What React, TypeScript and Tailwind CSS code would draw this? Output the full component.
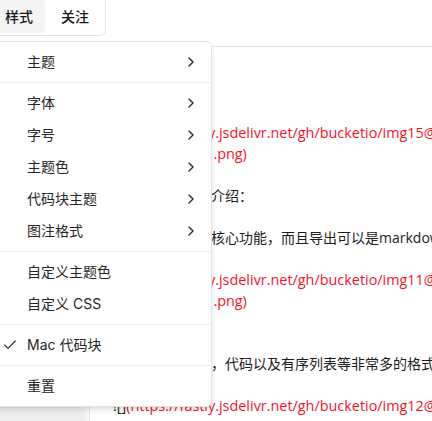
import React from 'react';
import { Check, ChevronRight } from 'lucide-react';

type MenuEntry = { label: string; sub?: boolean; checked?: boolean } | 'sep';

const menuEntries: MenuEntry[] = [
  { label: '主题', sub: true },
  'sep',
  { label: '字体', sub: true },
  { label: '字号', sub: true },
  { label: '主题色', sub: true },
  { label: '代码块主题', sub: true },
  { label: '图注格式', sub: true },
  'sep',
  { label: '自定义主题色' },
  { label: '自定义 CSS' },
  'sep',
  { label: 'Mac 代码块', checked: true },
  'sep',
  { label: '重置' },
];

type Seg = { text: string; red?: boolean };
type Line = { segs: Seg[]; cjk?: boolean };

// markdown source, one entry per visual line
const sourceLines: Line[] = [
  { segs: [] },
  { segs: [{ text: '## 简介' }] },
  { segs: [] },
  { segs: [{ text: '![]' }, { text: '(https://fastly.jsdelivr.net/gh/bucketio/img15@main/1690857', red: true }] },
  { segs: [{ text: 'main/1690857 .png)', red: true }] },
  { segs: [] },
  { segs: [{ text: '下面是详细功能介绍：' }], cjk: true },
  { segs: [] },
  { segs: [{ text: '支持微信公众号核心功能，而且导出可以是markdown格式' }], cjk: true },
  { segs: [] },
  { segs: [{ text: '![]' }, { text: '(https://fastly.jsdelivr.net/gh/bucketio/img11@main/1690857', red: true }] },
  { segs: [{ text: 'main/1690857 .png)', red: true }] },
  { segs: [] },
  { segs: [] },
  { segs: [{ text: '支持标题、表格，代码以及有序列表等非常多的格式' }], cjk: true },
  { segs: [] },
  { segs: [{ text: '![]' }, { text: '(https://fastly.jsdelivr.net/gh/bucketio/img12@main/1690857', red: true }] },
  { segs: [{ text: 'main/1690857 .png)', red: true }] },
];

const MenubarTrigger: React.FC<{ label: string; active?: boolean }> = ({ label, active }) => (
  <button
    className={`h-[33px] px-3 rounded-sm text-sm font-medium text-[#18181b] ${active ? 'bg-[#f4f4f5]' : ''}`}
  >
    {label}
  </button>
);

export default function App() {
  return (
    <div className="relative w-[432px] h-[421px] overflow-hidden bg-white font-['Inter','Noto_Sans_CJK_SC',sans-serif]">
      {/* Header */}
      <header className="h-[47px] border-b border-[#e5e5e5] flex items-start">
        <div className="-mt-[5px] -ml-[12px] flex items-center gap-1 rounded-md border border-[#e4e4e7] bg-white px-1 pt-1 pb-[2px]">
          <MenubarTrigger label="样式" active />
          <MenubarTrigger label="关注" />
        </div>
      </header>

      {/* Body */}
      <div className="flex h-[374px]">
        <aside className="w-[85px] bg-[#eeeeee]" />
        <div className="w-[5px] bg-[#f6f6f6] border-r border-[#e6e6e6]" />
        <main className="flex-1 overflow-hidden pl-[23px] pt-[12px] leading-[21px] text-[#1c1c1c] font-['Open_Sans','Noto_Sans_CJK_SC',sans-serif]">
          {sourceLines.map((line, i) => (
            <div key={i} className={`h-[21px] whitespace-pre ${line.cjk ? 'text-[14px]' : 'text-[14.4px]'}`}>
              {line.segs.map((s, j) => (
                <span key={j} className={s.red ? 'text-[#f2151f]' : ''}>
                  {s.text}
                </span>
              ))}
            </div>
          ))}
        </main>
      </div>

      {/* Dropdown menu */}
      <div className="absolute left-[-10px] top-[41px] w-[222px] rounded-md border border-[#e4e4e7] bg-white p-1 shadow-md text-[#262626]">
        {menuEntries.map((e, i) =>
          e === 'sep' ? (
            <div key={i} className="-mx-1 my-1 h-px bg-[#f0f0f0]" />
          ) : (
            <div key={i} className="relative flex h-8 items-center rounded-sm pl-8 pr-2 text-sm">
              {e.checked && (
                <span className="absolute left-[7px] flex h-4 w-4 items-center justify-center">
                  <Check className="h-4 w-4" strokeWidth={1.6} />
                </span>
              )}
              <span>{e.label}</span>
              {e.sub && <ChevronRight className="ml-auto h-4 w-4" strokeWidth={2} />}
            </div>
          )
        )}
      </div>
    </div>
  );
}
